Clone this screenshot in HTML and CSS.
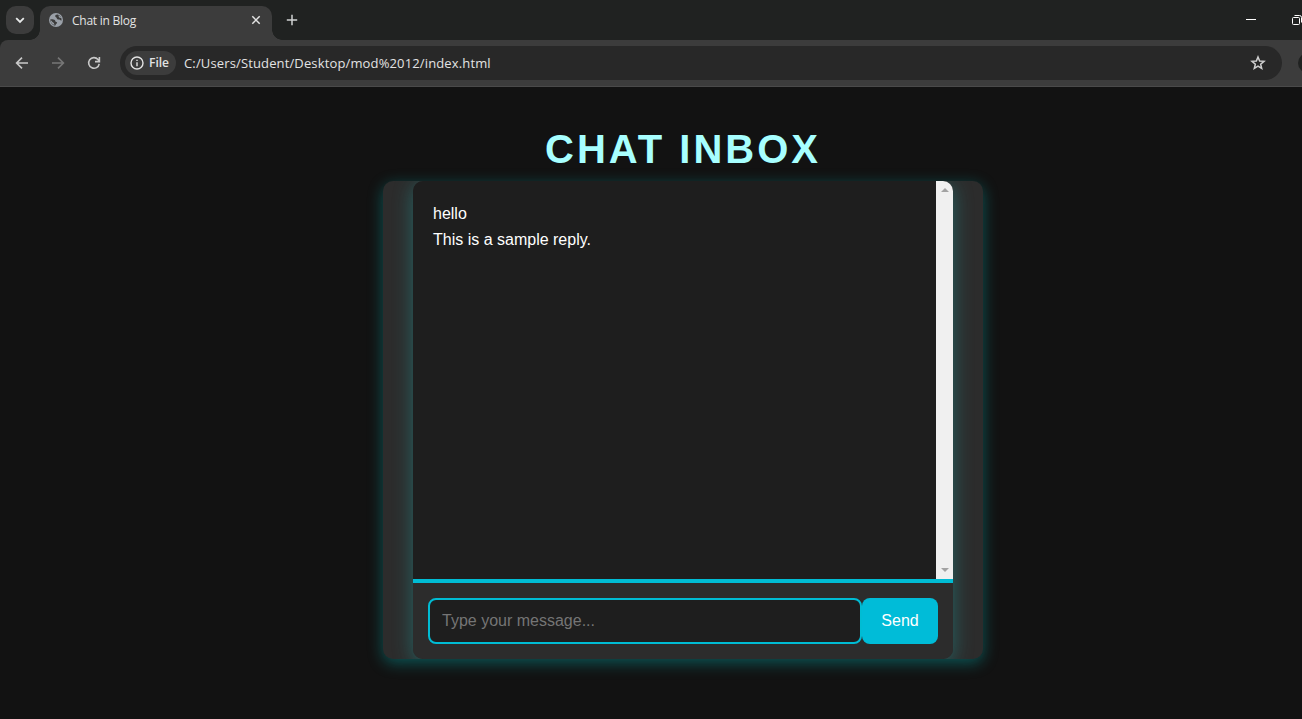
FILE: index.html
```html
<!DOCTYPE html>
<html lang="en">
<head>
<meta charset="utf-8">
<title>Chat in Blog</title>
<link rel="stylesheet" href="styles.css">
</head>
<body>
<header class="browser">
  <div class="tabstrip">
    <div class="tab-search">
      <svg width="28" height="28" viewBox="0 0 28 28" fill="none" stroke="#e8eaea" stroke-width="1.8"><path d="M10.2 12.2l3.8 3.8 3.8-3.8"/></svg>
    </div>
    <div class="tab">
      <svg class="globe" width="14" height="14" viewBox="0 0 14 14"><circle cx="7" cy="7" r="7" fill="#9aa0a8"/><path d="M8.6 1.6C6.8 1.5 6 2.4 6.3 3.6c.2.9 1.4.7 1.5 1.7.1 1.2 1.4 1.3 2.5 1.2 1 0 1.1 1.2 2.3 1.1.2-2.7-1.400-5.300-4-6zM1.400 6.200c1.500-.2 3.800 0 4.600 1.100.5.800.1 1.500 1.300 1.700 1.200.2.900 1.300.2 1.700-.9.400-.5 1.200-1.200 1.900C3.300 12.200 1.100 9.500 1.400 6.200z" fill="#3c3c3c"/><path d="M1.800 7.300c1.300 1 1.500 2 2.700 2.500.7.400.6 1.200 1 2.200C3.200 11.500 1.600 9.700 1.800 7.300zM9.500 2.200c.1 1 .2 2 1.200 2.500.7.300 1.300.2 1.600.6C11.800 3.900 10.800 2.800 9.500 2.200z" fill="#9aa0a8"/></svg>
      <span class="tab-title">Chat in Blog</span>
      <svg class="tab-close" width="10" height="10" viewBox="0 0 10 10" stroke="#e3e3e3" stroke-width="1.5"><path d="M1.3 1.3l7.4 7.4M8.7 1.3L1.3 8.7"/></svg>
    </div>
    <svg class="new-tab" width="12" height="12" viewBox="0 0 12 12" stroke="#d0d2d2" stroke-width="1.5"><path d="M6 .8v10.4M.8 6h10.4"/></svg>
    <div class="window-controls">
      <svg width="56" height="12" viewBox="0 0 56 12" fill="none" stroke="#fff"><path d="M0 5.5h10"/><rect x="46.5" y="3.500" width="7" height="7" rx="1"/><path d="M48.500 1.500h5a2 2 0 0 1 2 2v5"/></svg>
    </div>
  </div>
  <div class="toolbar">
    <div class="nav">
      <svg width="16" height="16" viewBox="0 0 16 16" fill="none" stroke="#c9c9c9" stroke-width="1.6"><path d="M14 8H3M8 2.6L2.6 8 8 13.4"/></svg>
      <svg width="16" height="16" viewBox="0 0 16 16" fill="none" stroke="#777" stroke-width="1.6"><path d="M2 8h11M8 2.6L13.4 8 8 13.4"/></svg>
      <svg width="16" height="16" viewBox="0 0 16 16" fill="none" stroke="#c9c9c9" stroke-width="1.6"><path d="M13.200 8.800A5.300 5.300 0 1 1 12 4.500L13.200 6M13.400 2v4.600H9"/></svg>
    </div>
    <div class="address">
      <div class="scheme">
        <svg width="14" height="14" viewBox="0 0 14 14" fill="none" stroke="#e3e3e3" stroke-width="1.4"><circle cx="7" cy="7" r="6"/><path d="M7 6.2v4M7 3.7v1.4"/></svg>
        <span>File</span>
      </div>
      <span class="url">C:/Users/Student/Desktop/mod%2012/index.html</span>
      <svg class="star" width="16" height="16" viewBox="0 0 16 16" fill="none" stroke="#d0d0d0" stroke-width="1.5"><path d="M8 2l1.65 4.05 4.35.3-3.35 2.8 1.05 4.25L8 11.1l-3.7 2.3 1.05-4.25L2 6.35l4.35-.3z"/></svg>
    </div>
    <div class="profile"></div>
  </div>
</header>
<main class="page">
  <h1 class="title">Chat Inbox</h1>
  <section class="chat-container">
    <div class="chat-box">
      <div class="messages">
        <div class="message-list">
          <p>hello</p>
          <p>This is a sample reply.</p>
        </div>
        <div class="scrollbar"><i class="up"></i><i class="down"></i></div>
      </div>
      <form class="composer">
        <input class="message-input" type="text" placeholder="Type your message...">
        <button class="send" type="button">Send</button>
      </form>
    </div>
  </section>
</main>
</body>
</html>
```
FILE: styles.css
```css
* { box-sizing: border-box; }
html, body { height: 100%; }
body {
  margin: 0;
  display: flex;
  flex-direction: column;
  overflow: hidden;
  background: #121212;
  color: #fff;
  font-family: "Liberation Sans", Arial, sans-serif;
}
svg { display: block; flex: none; }

.browser {
  flex: none;
  height: 87px;
  overflow: hidden;
  background: #202221;
  font-family: "Open Sans", "Noto Sans", sans-serif;
}
.tabstrip { display: flex; height: 40px; padding: 6px 0 0 6px; }
.tab-search { width: 28px; height: 28px; border-radius: 10px; background: #3c3c3c; }
.tab {
  position: relative;
  display: flex;
  align-items: center;
  width: 232px;
  height: 34px;
  margin-left: 6px;
  padding: 0 11px 6px 9px;
  border-radius: 10px 10px 0 0;
  background: #3c3c3c;
}
.tab::before, .tab::after {
  content: "";
  position: absolute;
  bottom: 0;
  width: 10px;
  height: 10px;
}
.tab::before { left: -10px; background: radial-gradient(circle at 0 0, transparent 9.5px, #3c3c3c 10px); }
.tab::after { right: -10px; background: radial-gradient(circle at 100% 0, transparent 9.5px, #3c3c3c 10px); }
.tab-title { margin: 2px auto 0 9px; font-size: 12px; line-height: 16px; color: #e3e3e3; letter-spacing: -.25px; }
.new-tab { margin: 8px 0 0 14px; }
.window-controls { width: 56px; margin: 8px 0 0 auto; }

.toolbar {
  display: flex;
  align-items: center;
  height: 47px;
  padding: 0 0 1px 14px;
  border-bottom: 1px solid #4a4a4a;
  border-top-left-radius: 8px;
  background: #3c3c3c;
}
.nav { display: flex; flex: none; gap: 20px; width: 106px; }
.address {
  display: flex;
  flex: none;
  align-items: center;
  width: 1162px;
  height: 34px;
  padding: 0 16px 0 5px;
  border-radius: 17px;
  background: #282828;
}
.scheme {
  display: flex;
  align-items: center;
  gap: 5px;
  width: 51px;
  height: 24px;
  padding-left: 5px;
  border-radius: 12px;
  background: #3c3c3c;
  font-size: 12px;
  font-weight: 600;
  color: #e3e3e3;
}
.url { margin: 0 auto 0 8px; font-size: 13px; letter-spacing: .14px; color: #e3e3e3; white-space: nowrap; }
.profile { flex: none; width: 20px; height: 20px; margin-left: 16px; border-radius: 50%; background: #202221; }

.page { display: flex; flex: 1; flex-direction: column; align-items: center; padding: 39px 0 0 64px; }
.title {
  margin: 0;
  height: 55px;
  font-size: 40px;
  line-height: 46px;
  letter-spacing: 3px;
  text-transform: uppercase;
  color: #a7ffff;
}
.chat-container {
  width: 600px;
  height: 478px;
  padding: 0 30px;
  border-radius: 10px;
  overflow: hidden;
  background: #2c2c2c;
  box-shadow: 0 4px 15px rgba(0, 188, 188, .4);
}
.chat-box {
  height: 478px;
  border-radius: 10px;
  box-shadow: 0 4px 20px rgba(30, 188, 188, .4);
}
.messages {
  display: flex;
  height: 398px;
  border-radius: 10px 10px 0 0;
  overflow: hidden;
  background: #1e1e1e;
}
.message-list { flex: 1; padding: 20px; font-size: 16px; line-height: 25.6px; }
.message-list p { margin: 0; }
.scrollbar {
  display: flex;
  flex-direction: column;
  justify-content: space-between;
  align-items: center;
  width: 17px;
  padding: 7px 0;
  background: #f0f0f0;
}
.scrollbar i { border: 4px solid transparent; border-top-width: 0; border-bottom: 4px solid #a3a3a3; }
.scrollbar .down { transform: rotate(180deg); }
.composer {
  display: flex;
  height: 80px;
  padding: 15px;
  border-top: 4px solid #00bcd4;
  border-radius: 0 0 10px 10px;
  background: #2c2c2c;
}
.message-input {
  flex: 1;
  min-width: 0;
  padding: 0 12px;
  border: 2px solid #00bcd4;
  border-radius: 8px;
  outline: 0;
  background: #1e1e1e;
  color: #fff;
  font: 16px "Liberation Sans", Arial, sans-serif;
}
.message-input::placeholder { color: #757575; }
.send {
  width: 76px;
  padding: 0 0 1px;
  border: 0;
  border-radius: 8px;
  background: #00bcd8;
  color: #fff;
  font: 16px "Liberation Sans", Arial, sans-serif;
}
```
